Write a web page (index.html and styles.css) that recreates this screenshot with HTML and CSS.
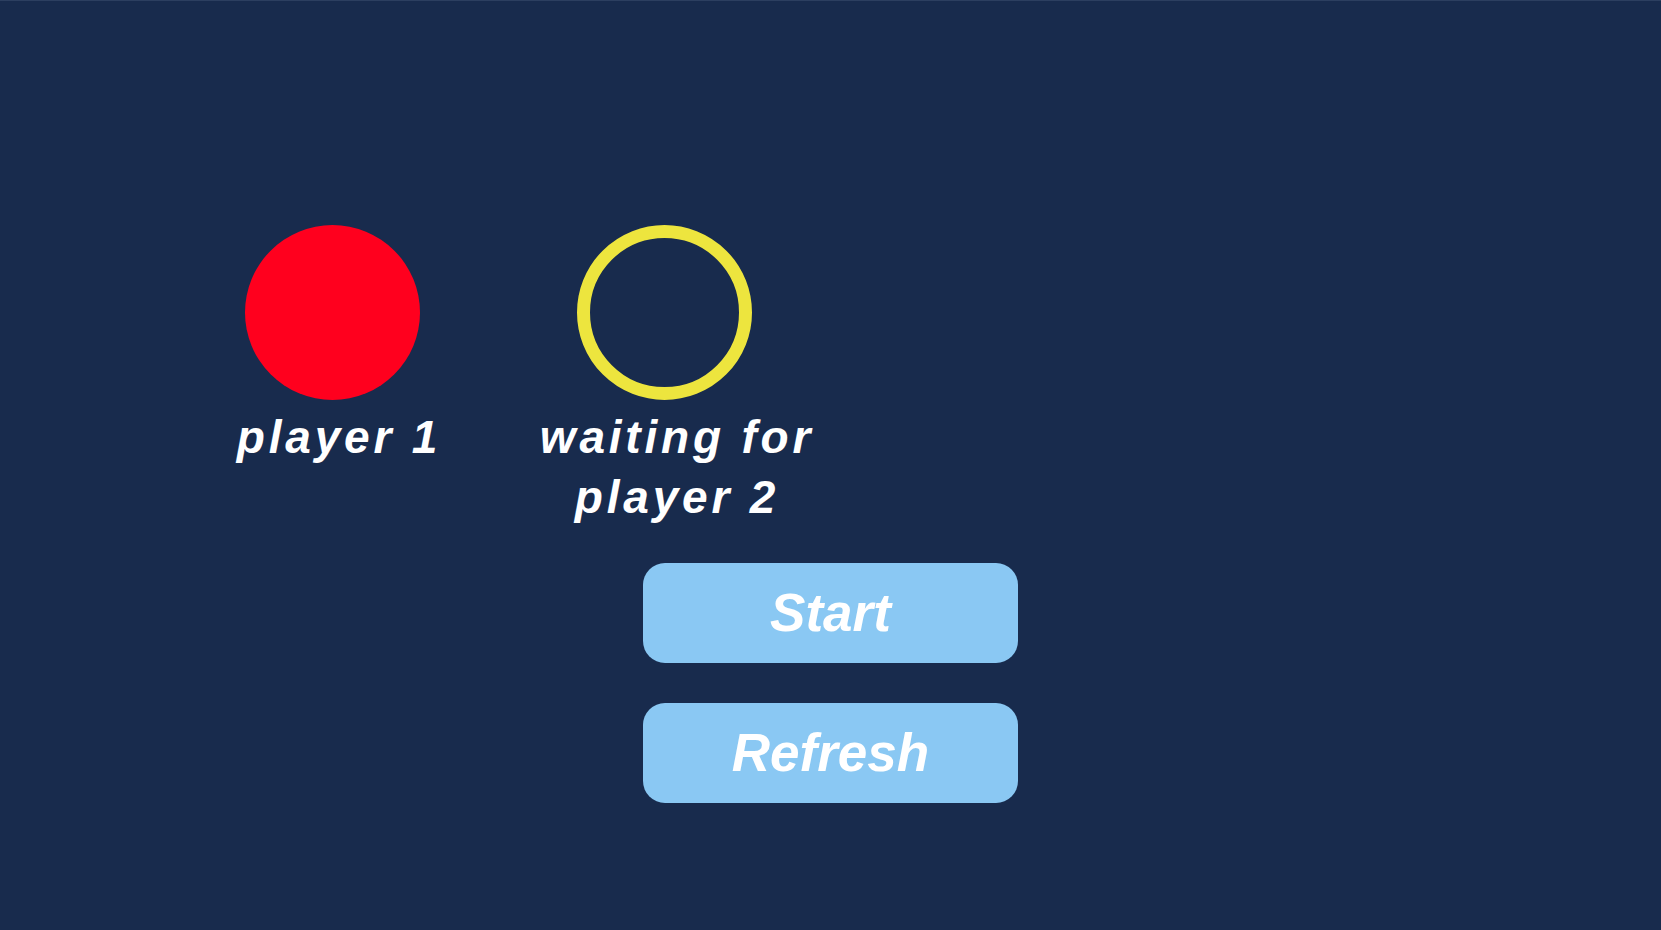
FILE: index.html
```html
<!DOCTYPE html>
<html>
<head>
<meta charset="utf-8">
<link rel="stylesheet" href="styles.css">
</head>
<body>
<div class="screen">
  <div class="players">
    <div class="player">
      <div class="token token-red"></div>
      <div class="label">player 1</div>
    </div>
    <div class="player">
      <div class="token token-empty"></div>
      <div class="label label-wait">waiting for<br>player 2</div>
    </div>
  </div>
  <div class="actions">
    <button class="btn">Start</button>
    <button class="btn">Refresh</button>
  </div>
</div>
</body>
</html>
```
FILE: styles.css
```css
html, body {
  margin: 0;
  padding: 0;
  background: #182b4d;
}
.screen {
  width: 1661px;
  height: 930px;
  box-sizing: border-box;
  border-top: 1px solid #2c3f60;
  padding-top: 224px;
  font-family: "Liberation Sans", Arial, sans-serif;
  color: #ffffff;
}
.players {
  display: flex;
  padding-left: 166px;
}
.player {
  width: 332px;
  display: flex;
  flex-direction: column;
  align-items: center;
}
.token {
  width: 175px;
  height: 175px;
  border-radius: 50%;
  box-sizing: border-box;
}
.token-red {
  background: #ff001e;
}
.token-empty {
  border: 13px solid #ede53e;
}
.label {
  margin-top: 7px;
  padding-left: 14px;
  font-size: 46px;
  font-weight: bold;
  font-style: italic;
  letter-spacing: 3.8px;
  line-height: 60px;
  text-align: center;
  white-space: nowrap;
}
.label-wait {
  padding-left: 26px;
}
.actions {
  margin-top: 36px;
  padding-left: 643px;
  display: flex;
  flex-direction: column;
  gap: 40px;
}
.btn {
  width: 375px;
  height: 100px;
  border: none;
  border-radius: 22px;
  background: #8ac8f3;
  color: #ffffff;
  font-family: "Liberation Sans", Arial, sans-serif;
  font-size: 53px;
  font-weight: bold;
  font-style: italic;
  line-height: 100px;
  padding: 0;
  text-align: center;
}
```
